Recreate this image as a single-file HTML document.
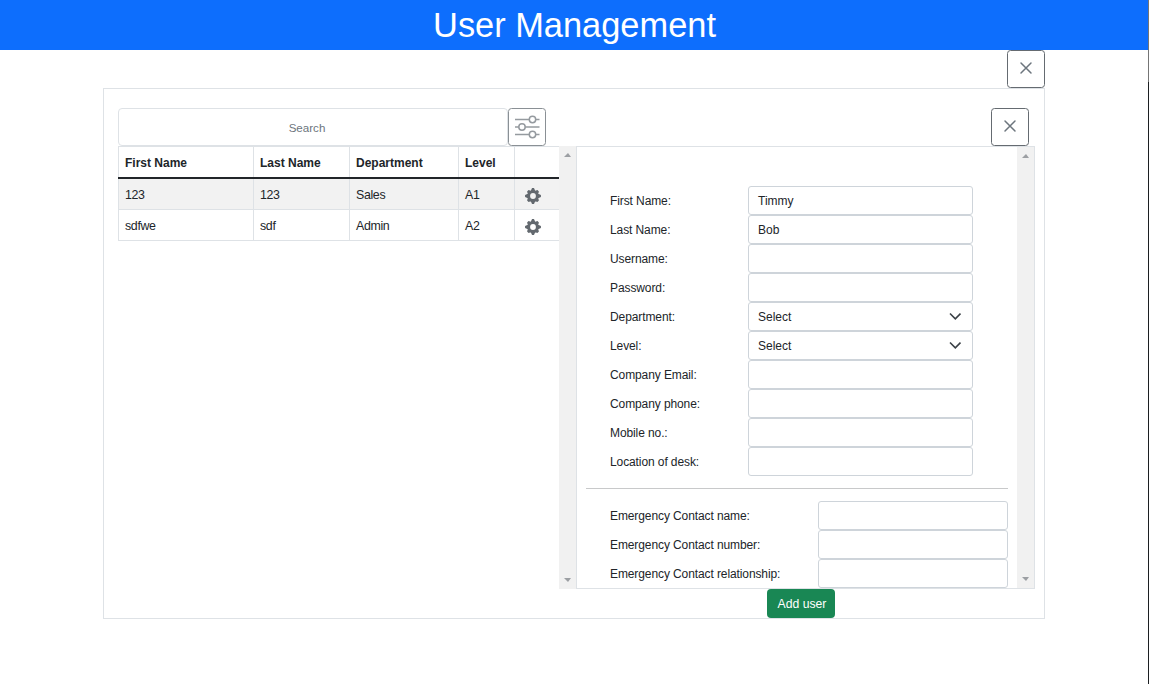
<!DOCTYPE html>
<html>
<head>
<meta charset="utf-8">
<style>
*{box-sizing:border-box;margin:0;padding:0}
html,body{width:1149px;height:684px;overflow:hidden;background:#fff}
body{font-family:"Liberation Sans",sans-serif;color:#212529;position:relative}
.abs{position:absolute}
#hdr{left:0;top:0;width:1149px;height:50px;background:#0d6efd;color:#fff;font-size:34.4px;text-align:center;line-height:50px;padding-left:0px}
.xbtn{position:absolute;width:38px;height:38px;border:1px solid #656b71;border-radius:3.5px;background:#fff}
.xbtn svg{position:absolute;left:0;top:0}
#outer{left:103px;top:88px;width:942px;height:531px;border:1px solid #dee2e6}
#search{left:118px;top:108px;width:390px;height:38px;border:1px solid #dee2e6;border-radius:4px;font-size:11.6px;color:#6c757d;text-align:center;line-height:38px;padding-right:12px}
#filt{left:508px;top:108px;width:38px;height:38px;border:1px solid #8a9095;border-radius:3.5px;background:#fff}
#lp{left:118px;top:146px;width:458px;height:443px}
#rp{left:576px;top:146px;width:459px;height:443px;border:1px solid #dee2e6}
.sb{position:absolute;width:17px;background:#f1f1f1}
.tri{position:absolute;width:0;height:0;border-left:4px solid transparent;border-right:3.5px solid transparent}
.up{border-bottom:4px solid #9c9fa3}
.dn{border-top:4px solid #9c9fa3}
.cell{position:absolute;white-space:nowrap}
.hline{position:absolute;height:1px;background:#dee2e6}
.vline{position:absolute;width:1px;background:#dee2e6}
.th{font-weight:bold;font-size:12px}
.td{font-size:12.4px;letter-spacing:-0.35px;margin-top:1px}
.lbl{position:absolute;left:610px;font-size:12px;white-space:nowrap;letter-spacing:-0.1px;margin-top:1px}
.inp{position:absolute;left:748px;width:225px;height:29px;border:1px solid #ced4da;border-radius:3px;background:#fff;font-size:12px;padding-left:9px;line-height:28px}
.einp{position:absolute;left:818px;width:190px;height:29px;border:1px solid #ced4da;border-radius:3px;background:#fff}
#add{left:767px;top:589px;width:68px;height:29px;background:#198754;border-radius:4px;color:#fff;font-size:12.2px;text-align:center;line-height:30px;padding-left:2px}
#edge1{left:1148px;top:0;width:1px;height:82px;background:#757575}
#edge2{left:1148px;top:82px;width:1px;height:602px;background:#1c1f22}
</style>
</head>
<body>
<div id="hdr" class="abs">User Management</div>
<div id="edge1" class="abs"></div>
<div id="edge2" class="abs"></div>

<div id="outer" class="abs"></div>

<div class="xbtn" style="left:1007px;top:50px">
<svg width="36" height="36" viewBox="0 0 36 36"><path d="M13 12 L23 22 M23 12 L13 22" stroke="#6c757d" stroke-width="1.5" stroke-linecap="round"/></svg>
</div>

<div id="search" class="abs">Search</div>
<div id="filt" class="abs">
<svg width="36" height="36" viewBox="0 0 36 36" style="position:absolute;left:0;top:0">
<g stroke="#959a9f" stroke-width="1.5" fill="#fff">
<path d="M6 10.5H30.5M6 18H30.5M6 25.5H30.5"/>
<circle cx="23.5" cy="10.5" r="3.2"/>
<circle cx="13" cy="18" r="3.2"/>
<circle cx="23.5" cy="25.5" r="3.2"/>
</g>
</svg>
</div>

<div class="xbtn" style="left:991px;top:108px">
<svg width="36" height="36" viewBox="0 0 36 36"><path d="M13 12 L23 22 M23 12 L13 22" stroke="#6c757d" stroke-width="1.5" stroke-linecap="round"/></svg>
</div>

<!-- left panel -->
<div id="lp" class="abs">
  <!-- striped row -->
  <div class="abs" style="left:0;top:33px;width:441px;height:30px;background:#f2f2f2"></div>
  <!-- borders -->
  <div class="hline" style="left:0;top:0;width:441px"></div>
  <div class="hline" style="left:0;top:63px;width:441px"></div>
  <div class="hline" style="left:0;top:94px;width:441px"></div>
  <div class="vline" style="left:0;top:0;height:95px"></div>
  <div class="vline" style="left:135px;top:0;height:95px"></div>
  <div class="vline" style="left:231px;top:0;height:95px"></div>
  <div class="vline" style="left:340px;top:0;height:95px"></div>
  <div class="vline" style="left:396px;top:0;height:95px"></div>
  <div class="abs" style="left:0;top:31px;width:441px;height:2px;background:#212529"></div>

  <div class="cell th" style="left:7px;top:10px">First Name</div>
  <div class="cell th" style="left:142px;top:10px">Last Name</div>
  <div class="cell th" style="left:238px;top:10px">Department</div>
  <div class="cell th" style="left:347px;top:10px">Level</div>

  <div class="cell td" style="left:7px;top:41px">123</div>
  <div class="cell td" style="left:142px;top:41px">123</div>
  <div class="cell td" style="left:238px;top:41px">Sales</div>
  <div class="cell td" style="left:347px;top:41px">A1</div>

  <div class="cell td" style="left:7px;top:72px">sdfwe</div>
  <div class="cell td" style="left:142px;top:72px">sdf</div>
  <div class="cell td" style="left:238px;top:72px">Admin</div>
  <div class="cell td" style="left:347px;top:72px">A2</div>

  <svg class="abs" style="left:407px;top:42px" width="16" height="16" viewBox="0 0 16 16"><path fill="#63696f" d="M5.81 2.85 L7.03 0.06 L8.97 0.06 L10.19 2.85 L10.10 2.81 L12.45 2.09 L13.91 3.55 L13.19 5.90 L13.15 5.81 L15.94 7.03 L15.94 8.97 L13.15 10.19 L13.19 10.10 L13.91 12.45 L12.45 13.91 L10.10 13.19 L10.19 13.15 L8.97 15.94 L7.03 15.94 L5.81 13.15 L5.90 13.19 L3.55 13.91 L2.09 12.45 L2.81 10.10 L2.85 10.19 L0.06 8.97 L0.06 7.03 L2.85 5.81 L2.81 5.90 L2.09 3.55 L3.55 2.09 L5.90 2.81Z M8 5.1 A2.9 2.9 0 1 0 8 10.9 A2.9 2.9 0 1 0 8 5.1Z" fill-rule="evenodd"/></svg>
  <svg class="abs" style="left:407px;top:73px" width="16" height="16" viewBox="0 0 16 16"><path fill="#63696f" d="M5.81 2.85 L7.03 0.06 L8.97 0.06 L10.19 2.85 L10.10 2.81 L12.45 2.09 L13.91 3.55 L13.19 5.90 L13.15 5.81 L15.94 7.03 L15.94 8.97 L13.15 10.19 L13.19 10.10 L13.91 12.45 L12.45 13.91 L10.10 13.19 L10.19 13.15 L8.97 15.94 L7.03 15.94 L5.81 13.15 L5.90 13.19 L3.55 13.91 L2.09 12.45 L2.81 10.10 L2.85 10.19 L0.06 8.97 L0.06 7.03 L2.85 5.81 L2.81 5.90 L2.09 3.55 L3.55 2.09 L5.90 2.81Z M8 5.1 A2.9 2.9 0 1 0 8 10.9 A2.9 2.9 0 1 0 8 5.1Z" fill-rule="evenodd"/></svg>

  <div class="sb" style="left:441px;top:0;height:443px"></div>
  <div class="tri up" style="left:446px;top:7px"></div>
  <div class="tri dn" style="left:446px;top:432px"></div>
</div>

<!-- right panel -->
<div id="rp" class="abs">
  <div class="sb" style="left:440px;top:0;height:441px"></div>
  <div class="tri up" style="left:445px;top:7px"></div>
  <div class="tri dn" style="left:445px;top:430px"></div>
</div>

<div class="lbl" style="top:193px">First Name:</div>
<div class="lbl" style="top:222px">Last Name:</div>
<div class="lbl" style="top:251px">Username:</div>
<div class="lbl" style="top:280px">Password:</div>
<div class="lbl" style="top:309px">Department:</div>
<div class="lbl" style="top:338px">Level:</div>
<div class="lbl" style="top:367px">Company Email:</div>
<div class="lbl" style="top:396px">Company phone:</div>
<div class="lbl" style="top:425px">Mobile no.:</div>
<div class="lbl" style="top:454px">Location of desk:</div>

<div class="inp" style="top:186px">Timmy</div>
<div class="inp" style="top:215px">Bob</div>
<div class="inp" style="top:244px"></div>
<div class="inp" style="top:273px"></div>
<div class="inp" style="top:302px">Select<svg class="abs" style="left:200px;top:9px" width="12" height="8" viewBox="0 0 12 8"><path d="M1 1.5L6.3 6.8L11.5 1.5" stroke="#3a4046" stroke-width="1.6" fill="none"/></svg></div>
<div class="inp" style="top:331px">Select<svg class="abs" style="left:200px;top:9px" width="12" height="8" viewBox="0 0 12 8"><path d="M1 1.5L6.3 6.8L11.5 1.5" stroke="#3a4046" stroke-width="1.6" fill="none"/></svg></div>
<div class="inp" style="top:360px"></div>
<div class="inp" style="top:389px"></div>
<div class="inp" style="top:418px"></div>
<div class="inp" style="top:447px"></div>

<div class="abs" style="left:586px;top:488px;width:422px;height:1px;background:#c8c9ca"></div>

<div class="lbl" style="top:508px">Emergency Contact name:</div>
<div class="lbl" style="top:537px">Emergency Contact number:</div>
<div class="lbl" style="top:566px">Emergency Contact relationship:</div>
<div class="einp" style="top:501px"></div>
<div class="einp" style="top:530px"></div>
<div class="einp" style="top:559px;height:29px"></div>

<div id="add" class="abs">Add user</div>
</body>
</html>
